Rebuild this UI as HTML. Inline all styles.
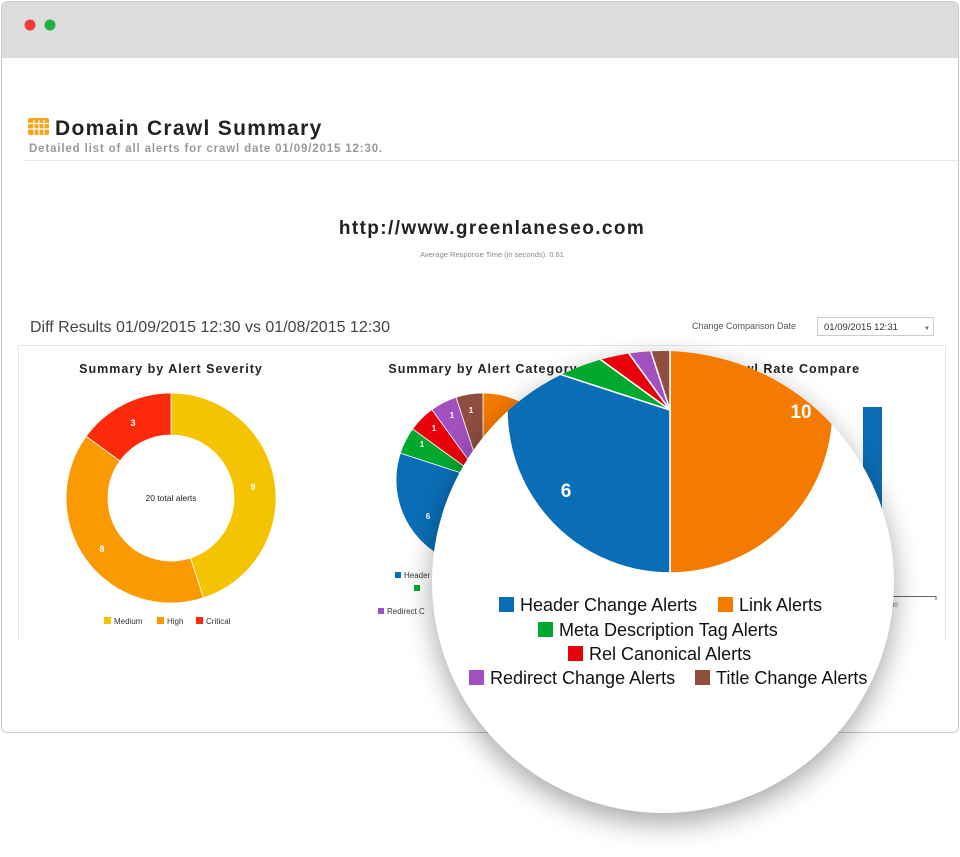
<!DOCTYPE html>
<html><head><meta charset="utf-8"><style>
html,body{margin:0;padding:0;background:#fff;}
body{width:960px;height:857px;overflow:hidden;position:relative;font-family:"Liberation Sans",sans-serif;}
</style></head><body>
<svg width="960" height="857" viewBox="0 0 960 857" xmlns="http://www.w3.org/2000/svg" style="position:absolute;left:0;top:0">
<defs>
<filter id="sh" x="-30%" y="-30%" width="160%" height="160%"><feGaussianBlur stdDeviation="14"/></filter>
<clipPath id="mag"><circle cx="663" cy="582" r="231"/></clipPath>
</defs>
<rect x="1.5" y="1.5" width="957" height="731" rx="6" fill="#fff" stroke="#c8c8c8"/>
<path d="M2,58 V8 a6,6 0 0 1 6,-6 H952 a6,6 0 0 1 6,6 V58 Z" fill="#dcdcdc"/>
<circle cx="30" cy="25" r="5.5" fill="#f03a3a"/>
<circle cx="50" cy="25" r="5.5" fill="#1fb141"/>
<rect x="28" y="118" width="21" height="17" rx="2" fill="#f7a21b"/>
<g stroke="#fff" stroke-width="1.2">
<line x1="28" y1="123.5" x2="49" y2="123.5"/><line x1="28" y1="129" x2="49" y2="129"/>
<line x1="34" y1="120" x2="34" y2="135"/><line x1="39" y1="120" x2="39" y2="135"/><line x1="44" y1="120" x2="44" y2="135"/>
</g>
<text x="55" y="135" font-size="21" font-weight="bold" fill="#222" letter-spacing="1.3">Domain Crawl Summary</text>
<text x="29" y="152" font-size="11.5" fill="#999" font-weight="bold" letter-spacing="0.85">Detailed list of all alerts for crawl date 01/09/2015 12:30.</text>
<line x1="25" y1="160.5" x2="958" y2="160.5" stroke="#e6e6e6"/>
<text x="492" y="234" font-size="19" font-weight="bold" fill="#222" text-anchor="middle" letter-spacing="1.4">http://www.greenlaneseo.com</text>
<text x="492" y="257" font-size="7.5" fill="#888" text-anchor="middle">Average Response Time (in seconds): 0.61</text>
<text x="30" y="332" font-size="16" fill="#444">Diff Results 01/09/2015 12:30 vs 01/08/2015 12:30</text>
<text x="692" y="329" font-size="9" fill="#555">Change Comparison Date</text>
<rect x="817.5" y="317.5" width="116" height="18" fill="#fff" stroke="#ccc"/>
<text x="824" y="330" font-size="9.5" fill="#333">01/09/2015 12:31</text>
<text x="924" y="330" font-size="6" fill="#666">▼</text>
<path d="M18.5,640 V345.5 H945.5 V640" fill="none" stroke="#e6e6e6"/>
<text x="171" y="373" font-size="12.5" font-weight="bold" fill="#222" text-anchor="middle" letter-spacing="1">Summary by Alert Severity</text>
<path d="M171,393 A105,105 0 0 1 203.4,597.9 L190.5,557.9 A63,63 0 0 0 171,435 Z" fill="#f5c400" stroke="#fff" stroke-width="0.8"/>
<path d="M203.4,597.9 A105,105 0 0 1 86.1,436.3 L120,461 A63,63 0 0 0 190.5,557.9 Z" fill="#fb9a00" stroke="#fff" stroke-width="0.8"/>
<path d="M86.1,436.3 A105,105 0 0 1 171,393 L171,435 A63,63 0 0 0 120,461 Z" fill="#fb2a0a" stroke="#fff" stroke-width="0.8"/>
<text x="253" y="490" font-size="9" fill="#fff" font-weight="bold" text-anchor="middle">9</text>
<text x="102" y="552" font-size="9" fill="#fff" font-weight="bold" text-anchor="middle">8</text>
<text x="133" y="426" font-size="9" fill="#fff" font-weight="bold" text-anchor="middle">3</text>
<text x="171" y="501" font-size="8.5" fill="#222" text-anchor="middle">20 total alerts</text>
<rect x="104" y="617" width="7" height="7" fill="#f5c400"/><text x="114" y="624" font-size="8" fill="#333">Medium</text>
<rect x="157" y="617" width="7" height="7" fill="#fb9a00"/><text x="167" y="624" font-size="8" fill="#333">High</text>
<rect x="196" y="617" width="7" height="7" fill="#fb2a0a"/><text x="206" y="624" font-size="8" fill="#333">Critical</text>
<text x="483" y="373" font-size="12.5" font-weight="bold" fill="#222" text-anchor="middle" letter-spacing="1">Summary by Alert Category</text>
<g stroke="#fff" stroke-width="0.8">
<path d="M483,480 L483,393 A87,87 0 0 1 483,567 Z" fill="#f47a00"/>
<path d="M483,480 L483,567 A87,87 0 0 1 400.3,453.1 Z" fill="#0a6eb6"/>
<path d="M483,480 L400.3,453.1 A87,87 0 0 1 412.6,428.9 Z" fill="#00a82d"/>
<path d="M483,480 L412.6,428.9 A87,87 0 0 1 431.9,409.6 Z" fill="#e8000b"/>
<path d="M483,480 L431.9,409.6 A87,87 0 0 1 456.1,397.3 Z" fill="#a24fc0"/>
<path d="M483,480 L456.1,397.3 A87,87 0 0 1 483,393 Z" fill="#8f4d40"/>
</g>
<g font-size="8" fill="#fff" font-weight="bold" text-anchor="middle">
<text x="428" y="519">6</text><text x="422" y="447">1</text><text x="434" y="431">1</text><text x="452" y="418">1</text><text x="471" y="413">1</text>
</g>
<rect x="395" y="572" width="6" height="6" fill="#0a6eb6"/><text x="404" y="578" font-size="8" fill="#333">Header</text>
<rect x="414" y="585" width="6" height="6" fill="#00a82d"/>
<rect x="378" y="608" width="6" height="6" fill="#a24fc0"/><text x="387" y="614" font-size="8" fill="#333">Redirect C</text>
<text x="790" y="373" font-size="12.5" font-weight="bold" fill="#222" text-anchor="middle" letter-spacing="1">Crawl Rate Compare</text>
<rect x="863" y="407" width="19" height="190" fill="#0a6eb6"/>
<path d="M885,596.5 H936 V600" fill="none" stroke="#666"/>
<text x="891" y="607" font-size="6" fill="#666">30</text>
<circle cx="663" cy="592" r="231" fill="#000" opacity="0.35" filter="url(#sh)"/>
<circle cx="663" cy="582" r="231" fill="#fff"/>
<g clip-path="url(#mag)" stroke="#fff" stroke-width="1.5">
<path d="M670,410 L670,247 A163,163 0 0 1 670,573 Z" fill="#f47a00"/>
<path d="M670,410 L670,573 A163,163 0 0 1 515,359.6 Z" fill="#0a6eb6"/>
<path d="M670,410 L515,359.6 A163,163 0 0 1 538.1,314.2 Z" fill="#00a82d"/>
<path d="M670,410 L538.1,314.2 A163,163 0 0 1 574.2,278.1 Z" fill="#e8000b"/>
<path d="M670,410 L574.2,278.1 A163,163 0 0 1 619.6,255 Z" fill="#a24fc0"/>
<path d="M670,410 L619.6,255 A163,163 0 0 1 670,247 Z" fill="#8f4d40"/>
</g>
<text x="801" y="418" font-size="19" font-weight="bold" fill="#fff" text-anchor="middle">10</text>
<text x="566" y="497" font-size="19" font-weight="bold" fill="#fff" text-anchor="middle">6</text>
<g font-size="18" fill="#111">
<rect x="499" y="597" width="15" height="15" fill="#0a6eb6"/><text x="520" y="611">Header Change Alerts</text>
<rect x="718" y="597" width="15" height="15" fill="#f47a00"/><text x="739" y="611">Link Alerts</text>
<rect x="538" y="622" width="15" height="15" fill="#00a82d"/><text x="559" y="636">Meta Description Tag Alerts</text>
<rect x="568" y="646" width="15" height="15" fill="#e8000b"/><text x="589" y="660">Rel Canonical Alerts</text>
<rect x="469" y="670" width="15" height="15" fill="#a24fc0"/><text x="490" y="684">Redirect Change Alerts</text>
<rect x="695" y="670" width="15" height="15" fill="#8f4d40"/><text x="716" y="684">Title Change Alerts</text>
</g>
</svg>
</body></html>
